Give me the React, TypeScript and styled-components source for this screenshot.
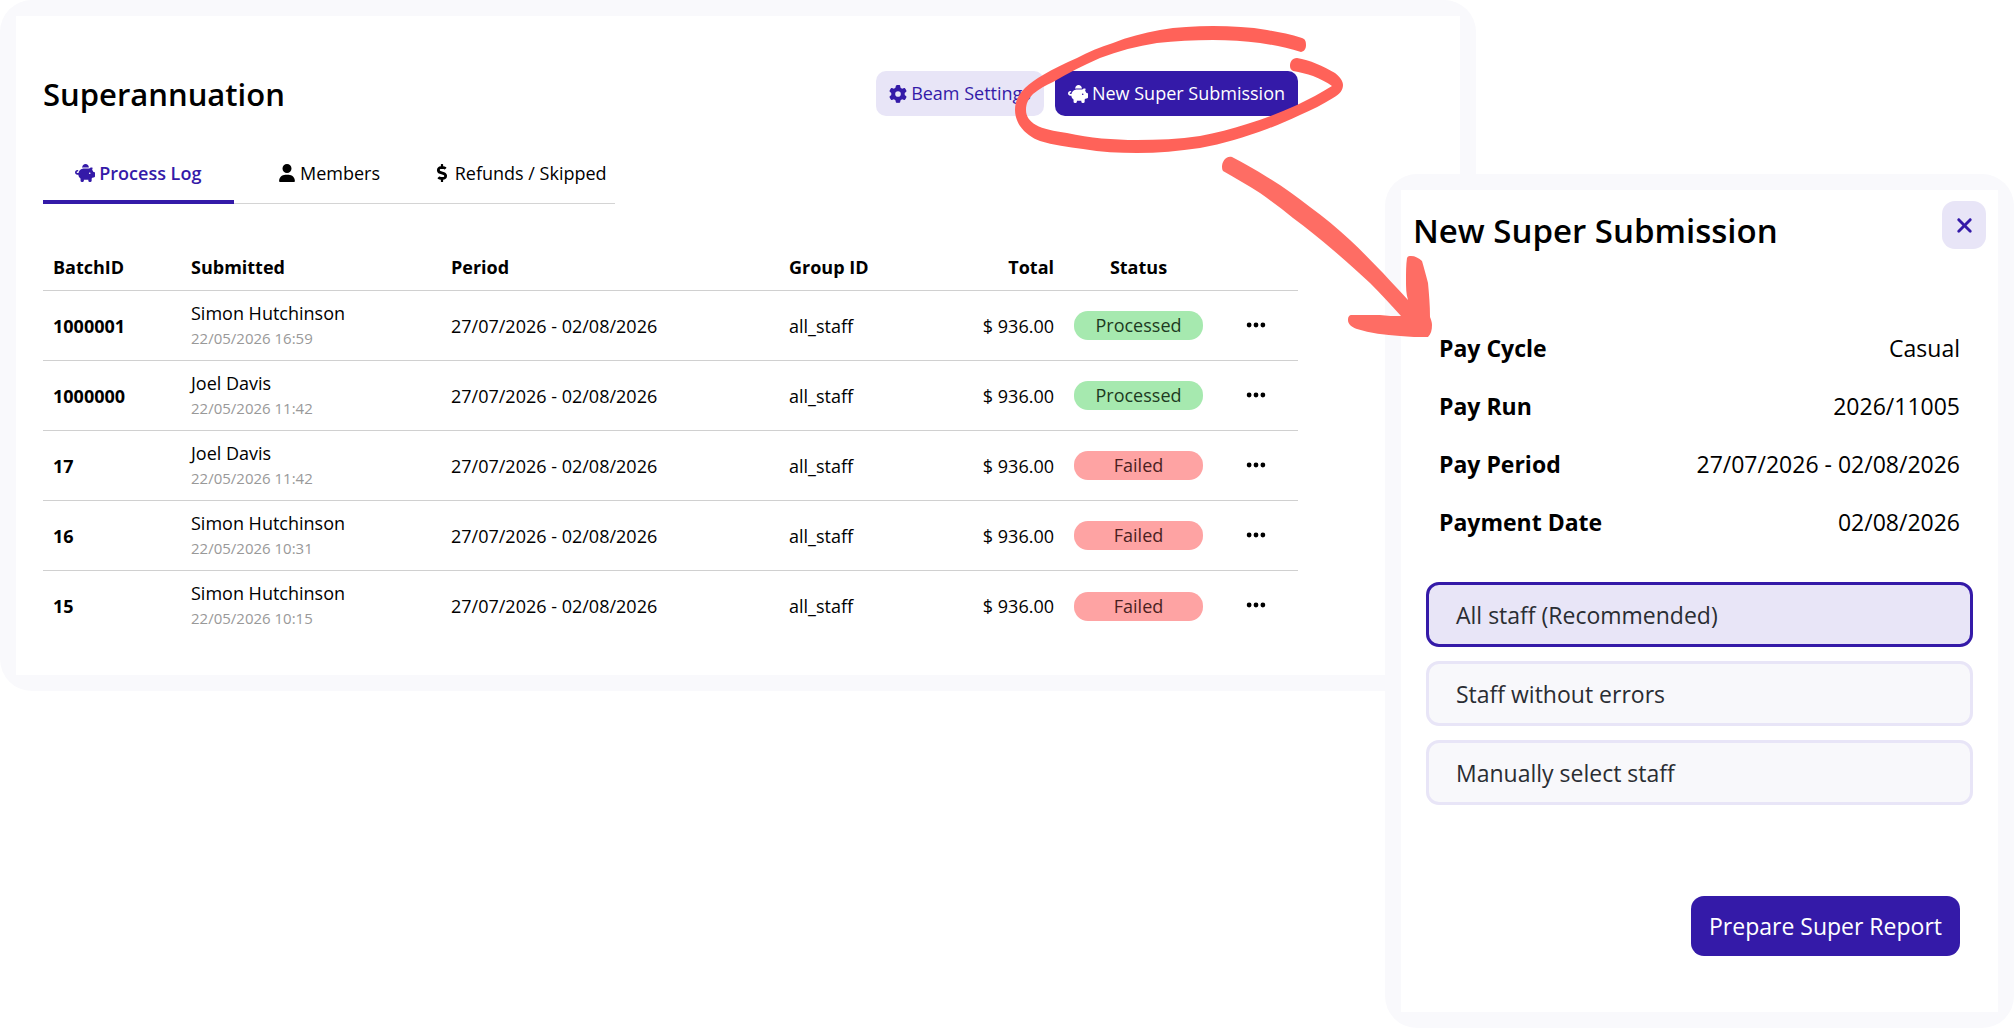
import React from "react";
import styled, { createGlobalStyle, css } from "styled-components";
import { FaPiggyBank, FaUser, FaGear, FaEllipsis, FaXmark } from "react-icons/fa6";
import { FaDollarSign } from "react-icons/fa";

const ink = "#000";
const brand = "#341aa8";
const tint = "#e8e5f7";
const frame = "#f9f9fc";

const GlobalStyle = createGlobalStyle`
  *, *::before, *::after { box-sizing: border-box; }
  body {
    margin: 0;
    background: #fff;
    color: ${ink};
    font-family: "Open Sans", "Noto Sans", sans-serif;
    font-size: 18px;
    line-height: 24px;
  }
  button { font: inherit; cursor: pointer; }
  h1, h2, dl, dd { margin: 0; }
`;

const Page = styled.div`
  position: relative;
  display: grid;
  grid-template-columns: minmax(0, 1fr) 91px 538px;
  align-items: start;
`;

const panel = css`
  grid-row: 1;
  padding: 16px;
  border-radius: 32px;
  background: ${frame};
`;

const MainPanel = styled.main`
  ${panel}
  grid-column: 1 / 3;
`;

const MainBody = styled.div`
  padding: 55px 162px 34px 27px;
  background: #fff;
`;

const SidePanel = styled.aside`
  ${panel}
  grid-column: 2 / 4;
  margin-top: 174px;
`;

const SideBody = styled.div`
  padding: 11px 12px 56px;
  background: #fff;
`;

const Header = styled.header`
  display: flex;
  align-items: center;
  justify-content: space-between;
`;

const Title = styled.h1`
  font-size: 31px;
  line-height: 40px;
  font-weight: 600;
`;

const Actions = styled.div`
  display: flex;
  gap: 11px;
`;

const iconLabel = css`
  display: flex;
  align-items: center;
  gap: 4px;

  svg {
    width: auto;
    height: 18px;
  }
`;

const PiggyIcon = styled(FaPiggyBank)`
  && { height: 20px; }
`;

const Button = styled.button<{ $primary?: boolean; $large?: boolean }>`
  ${iconLabel}
  border: 0;
  background: ${(p) => (p.$primary ? brand : tint)};
  color: ${(p) => (p.$primary ? "#fff" : brand)};
  padding: ${(p) => (p.$large ? "14px 18px" : "10px 13px")};
  border-radius: ${(p) => (p.$large ? 13 : 10)}px;
  font-size: ${(p) => (p.$large ? 23 : 18)}px;
  line-height: ${(p) => (p.$large ? 32 : 25)}px;
`;

const Tabs = styled.nav`
  display: grid;
  grid-template-columns: repeat(3, 1fr);
  width: 572px;
  margin-top: 40px;
`;

const Tab = styled.button<{ $active?: boolean }>`
  ${iconLabel}
  justify-content: center;
  height: 48px;
  padding: 0 0 14px;
  border: 0;
  background: none;
  color: ${(p) => (p.$active ? brand : ink)};
  font-weight: ${(p) => (p.$active ? 600 : 400)};
  box-shadow: inset 0 ${(p) => (p.$active ? "-4px " + brand : "-1px #d4d4d4")};
`;

const Table = styled.table`
  width: 100%;
  margin-top: 46px;
  table-layout: fixed;
  border-collapse: separate;
  border-spacing: 0;
`;

type Align = "left" | "right" | "center";

const HeadCell = styled.th<{ $align?: Align }>`
  height: 41px;
  padding: 0 10px 6px;
  border-bottom: 1px solid #d0d0d0;
  text-align: ${(p) => p.$align ?? "left"};
  font-weight: 700;
`;

const Row = styled.tr`
  &:last-child > * { border-bottom: 0; }
`;

const Cell = styled.td<{ $align?: Align }>`
  height: 70px;
  padding: 0 10px;
  border-bottom: 1px solid #d0d0d0;
  text-align: ${(p) => p.$align ?? "left"};
`;

const When = styled.time`
  display: block;
  color: #999;
  font-size: 15px;
  line-height: 26px;
`;

const Badge = styled.span<{ $ok: boolean }>`
  display: block;
  padding: 2px 0 3px;
  border-radius: 14px;
  background: ${(p) => (p.$ok ? "#a6e9af" : "#fea3a3")};
  color: ${(p) => (p.$ok ? "#1d3a22" : "#4a1f1f")};
`;

const MenuButton = styled.button`
  display: flex;
  margin: 0 auto;
  padding: 0 0 2px;
  border: 0;
  background: none;
  color: ${ink};
  font-size: 22px;
`;

const SideHeader = styled.header`
  display: flex;
  align-items: flex-start;
  justify-content: space-between;
`;

const SideTitle = styled.h2`
  padding-top: 8px;
  font-size: 33px;
  line-height: 44px;
  font-weight: 600;
`;

const CloseButton = styled.button`
  display: flex;
  align-items: center;
  justify-content: center;
  width: 44px;
  height: 48px;
  padding: 0;
  border: 0;
  border-radius: 13px;
  background: ${tint};
  color: ${brand};
  font-size: 23px;
`;

const Details = styled.dl`
  display: grid;
  gap: 26px;
  padding: 79px 26px 0;
  font-size: 23px;
  line-height: 32px;
`;

const Detail = styled.div`
  display: flex;
  justify-content: space-between;
`;

const Term = styled.dt`
  font-weight: 700;
`;

const Options = styled.fieldset`
  display: grid;
  gap: 14px;
  min-width: 0;
  margin: 44px 13px 0;
  padding: 0;
  border: 0;
`;

const Option = styled.label`
  display: flex;
  align-items: center;
  height: 65px;
  padding: 0 27px;
  border: 3px solid ${tint};
  border-radius: 13px;
  background: #f8f8fb;
  color: #2a2d33;
  font-size: 23px;
  cursor: pointer;

  &:has(input:checked) {
    border-color: ${brand};
    background: ${tint};
  }
`;

const Radio = styled.input`
  appearance: none;
  width: 0;
  height: 0;
  margin: 0;
`;

const Footer = styled.footer`
  display: flex;
  justify-content: flex-end;
  padding: 91px 26px 0;
`;

const Scribble = styled.svg`
  position: absolute;
  top: 20px;
  right: 564px;
  width: 450px;
  height: 330px;
  pointer-events: none;
`;

type Batch = { id: string; name: string; when: string; ok: boolean };

const batches: Batch[] = [
  { id: "1000001", name: "Simon Hutchinson", when: "22/05/2026 16:59", ok: true },
  { id: "1000000", name: "Joel Davis", when: "22/05/2026 11:42", ok: true },
  { id: "17", name: "Joel Davis", when: "22/05/2026 11:42", ok: false },
  { id: "16", name: "Simon Hutchinson", when: "22/05/2026 10:31", ok: false },
  { id: "15", name: "Simon Hutchinson", when: "22/05/2026 10:15", ok: false },
];

const details = [
  ["Pay Cycle", "Casual"],
  ["Pay Run", "2026/11005"],
  ["Pay Period", "27/07/2026 - 02/08/2026"],
  ["Payment Date", "02/08/2026"],
];

const options = ["All staff (Recommended)", "Staff without errors", "Manually select staff"];

export default function App() {
  return (
    <>
      <GlobalStyle />
      <Page>
        <MainPanel>
          <MainBody>
            <Header>
              <Title>Superannuation</Title>
              <Actions>
                <Button><FaGear />Beam Settings</Button>
                <Button $primary><PiggyIcon />New Super Submission</Button>
              </Actions>
            </Header>
            <Tabs>
              <Tab $active><PiggyIcon />Process Log</Tab>
              <Tab><FaUser />Members</Tab>
              <Tab><FaDollarSign />Refunds / Skipped</Tab>
            </Tabs>
            <Table>
              <colgroup>
                <col style={{ width: 138 }} />
                <col style={{ width: 260 }} />
                <col style={{ width: 338 }} />
                <col />
                <col style={{ width: 126 }} />
                <col style={{ width: 149 }} />
                <col style={{ width: 85 }} />
              </colgroup>
              <thead>
                <tr>
                  <HeadCell>BatchID</HeadCell>
                  <HeadCell>Submitted</HeadCell>
                  <HeadCell>Period</HeadCell>
                  <HeadCell>Group ID</HeadCell>
                  <HeadCell $align="right">Total</HeadCell>
                  <HeadCell $align="center">Status</HeadCell>
                  <HeadCell aria-label="Actions" />
                </tr>
              </thead>
              <tbody>
                {batches.map((b) => (
                  <Row key={b.id}>
                    <Cell><b>{b.id}</b></Cell>
                    <Cell>{b.name}<When>{b.when}</When></Cell>
                    <Cell>27/07/2026 - 02/08/2026</Cell>
                    <Cell>all_staff</Cell>
                    <Cell $align="right">$ 936.00</Cell>
                    <Cell $align="center"><Badge $ok={b.ok}>{b.ok ? "Processed" : "Failed"}</Badge></Cell>
                    <Cell $align="center">
                      <MenuButton aria-label={"Actions for batch " + b.id}><FaEllipsis /></MenuButton>
                    </Cell>
                  </Row>
                ))}
              </tbody>
            </Table>
          </MainBody>
        </MainPanel>

        <SidePanel>
          <SideBody>
            <SideHeader>
              <SideTitle>New Super Submission</SideTitle>
              <CloseButton aria-label="Close"><FaXmark /></CloseButton>
            </SideHeader>
            <Details>
              {details.map(([term, value]) => (
                <Detail key={term}><Term>{term}</Term><dd>{value}</dd></Detail>
              ))}
            </Details>
            <Options aria-label="Staff to include">
              {options.map((o, i) => (
                <Option key={o}>
                  <Radio type="radio" name="staff" defaultChecked={i === 0} />
                  {o}
                </Option>
              ))}
            </Options>
            <Footer>
              <Button $primary $large>Prepare Super Report</Button>
            </Footer>
          </SideBody>
        </SidePanel>

        <Scribble viewBox="1000 20 450 330" aria-hidden="true">
          <path
            fill="#ff6259"
            d="M1302 38C1290 34 1278 32 1267 30C1250 27 1232 26 1213 26C1195 26 1177 27 1160 30C1143 33 1128 37 1113 43C1100 47 1088 52 1077 58C1065 63 1053 69 1043 75C1036 79 1030 83 1025 88C1018 95 1015 102 1015 110C1015 116 1017 121 1020 126C1025 133 1032 138 1040 141C1053 145 1068 147 1083 149C1101 152 1119 153 1137 153C1158 153 1179 151 1200 148C1223 144 1245 137 1267 129C1278 125 1289 120 1300 115C1312 110 1323 104 1333 98C1340 94 1343 90 1343 85C1343 81 1340 77 1335 73C1323 66 1310 60 1297 58C1292 58 1290 62 1290 66C1290 68 1291 70 1293 71C1300 72 1307 74 1313 76C1320 79 1327 82 1332 86C1321 93 1309 99 1297 105C1281 112 1264 119 1247 124C1232 129 1216 133 1200 136C1179 139 1158 140 1137 140C1113 140 1090 138 1067 133C1054 131 1043 129 1036 125C1029 121 1026 116 1026 110C1026 104 1028 99 1033 94C1039 89 1046 85 1053 82C1068 73 1084 65 1100 58C1118 51 1137 46 1157 43C1175 41 1194 40 1213 40C1229 40 1245 41 1260 43C1274 45 1288 48 1301 52C1305 51 1306 48 1306 45C1306 41 1305 39 1302 38Z"
          />
          <path
            fill="#fe6d64"
            d="M1232 157C1244 163 1256 170 1267 177C1282 186 1296 196 1310 207C1324 217 1337 228 1350 240C1361 250 1372 262 1383 273C1391 282 1400 291 1408 300C1406 294 1406 287 1406 280C1406 272 1406 265 1407 258C1408 256 1409 256 1411 256C1415 256 1419 258 1422 261C1424 268 1426 275 1428 283C1429 294 1430 305 1430 317C1431 320 1432 322 1432 325C1432 330 1431 334 1428 337C1419 337 1409 337 1400 336C1385 335 1370 333 1357 329C1351 327 1348 324 1348 320C1348 317 1349 315 1352 315C1361 315 1371 315 1380 315C1387 316 1394 316 1401 316C1391 305 1381 294 1370 283C1358 272 1346 261 1333 250C1320 239 1307 228 1293 218C1282 209 1271 201 1260 193C1248 185 1235 178 1223 171C1220 166 1224 155 1232 157Z"
          />
        </Scribble>
      </Page>
    </>
  );
}
